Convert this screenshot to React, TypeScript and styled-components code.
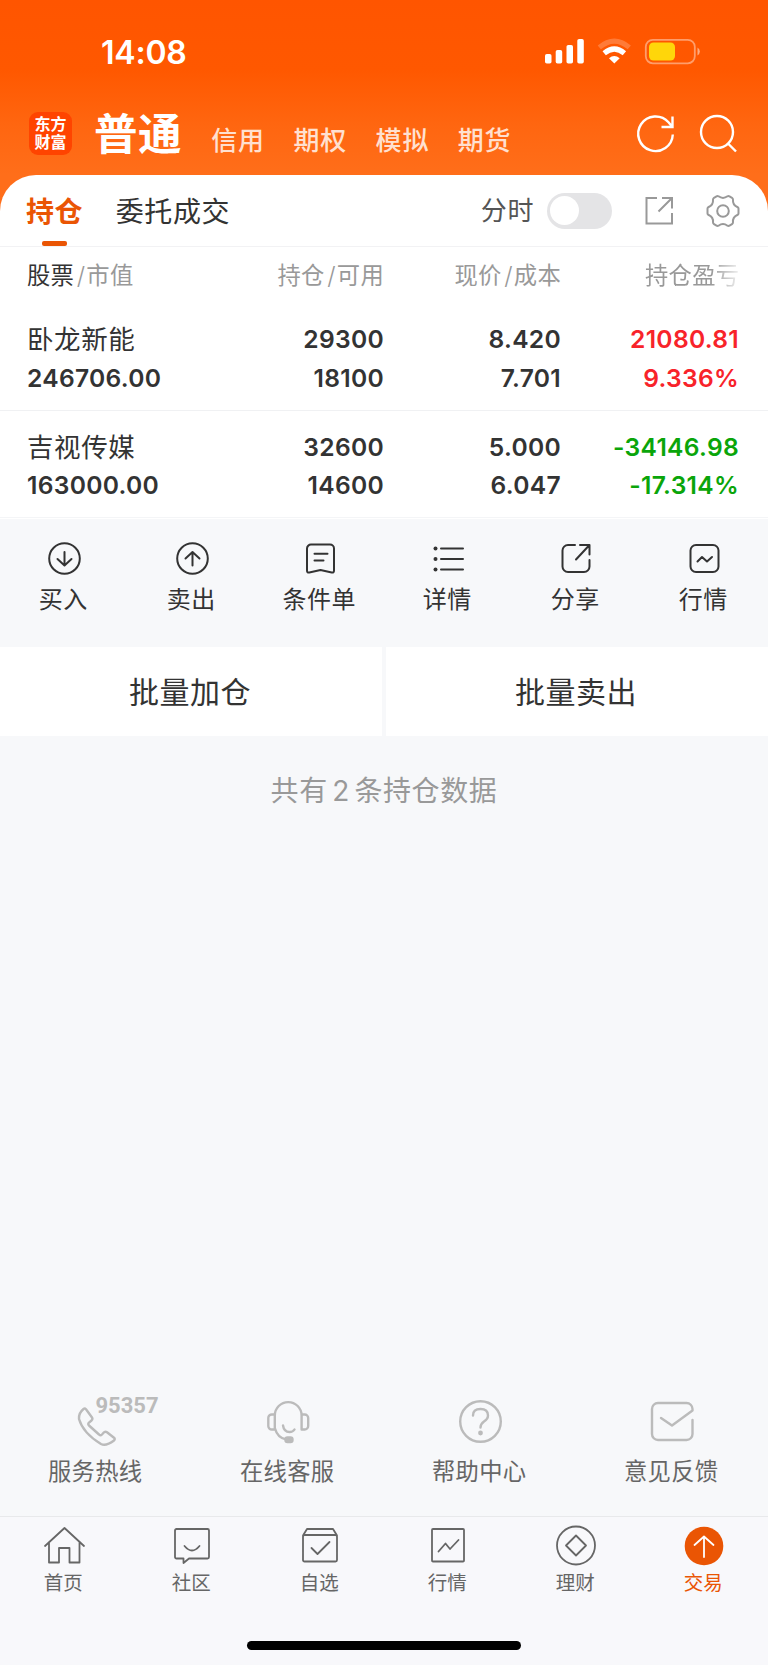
import React from "react";
import styled, { createGlobalStyle } from "styled-components";

const sans = `Inter, "Noto Sans CJK SC", sans-serif`;

const GlobalStyle = createGlobalStyle`
  *, *::before, *::after { box-sizing: border-box; }
  body { margin: 0; background: #f7f8fa; font-family: ${sans}; }
  svg { display: block; flex: none; overflow: visible; }
`;

const Screen = styled.div`
  width: 768px;
  height: 1665px;
  display: flex;
  flex-direction: column;
  background: #f7f8fa;
  color: #333;
  overflow: hidden;
  white-space: nowrap;
`;

const Top = styled.header`
  height: 215px;
  flex: none;
  background: linear-gradient(#ff5500 0, #ff5800 70px, #ff6610 125px, #ff6e1a 175px, #ff6e1a 100%);
`;

const StatusBar = styled.div`
  height: 104px;
  padding: 0 68px 0 101px;
  display: flex;
  align-items: center;
  justify-content: space-between;
  color: #fff;
`;

const Clock = styled.span`
  padding-top: 2px;
  font-size: 32px;
  font-weight: 600;
  line-height: 40px;
  letter-spacing: -0.2px;
`;

const StatusIcons = styled.div`
  display: flex;
  align-items: center;
`;

const AccountBar = styled.div`
  height: 71px;
  padding: 0 31px 0 29px;
  display: flex;
  align-items: center;
`;

const Logo = styled.div`
  width: 43px;
  height: 43px;
  margin: -12px 22px 0 0;
  padding: 4px 0 0 5.5px;
  border-radius: 9px;
  background: #ff4400;
  color: #fff;
  font-size: 16px;
  font-weight: 700;
  line-height: 17.6px;
`;

const CurrentAccount = styled.h1`
  margin: -12px 29.2px 0 0;
  font-size: 43.5px;
  font-weight: 700;
  line-height: 50px;
  letter-spacing: 0.5px;
  color: #fff;
`;

const Accounts = styled.nav`
  display: flex;
  gap: 28.6px;
  margin-top: 3px;
`;

const Account = styled.a`
  font-size: 26px;
  font-weight: 500;
  line-height: 32px;
  letter-spacing: 0.8px;
  color: #ffe0d0;
`;

const HeaderTools = styled.div`
  display: flex;
  gap: 24px;
  margin: -12px 0 0 auto;
`;

const Card = styled.main`
  flex: none;
  height: 343.5px;
  margin-top: -40px;
  background: #fff;
  border-radius: 36px 36px 0 0;
`;

const TabBar = styled.div`
  height: 72px;
  padding: 0 28px 0 26px;
  display: flex;
  align-items: center;
  border-bottom: 1px solid #f2f2f4;
`;

const Tab = styled.div<{ $active?: boolean }>`
  height: 71px;
  margin-right: 32.5px;
  display: flex;
  flex-direction: column;
  align-items: center;
  font-size: 28px;
  font-weight: ${(p) => (p.$active ? 700 : 400)};
  line-height: 74px;
  letter-spacing: 0.6px;
  color: ${(p) => (p.$active ? "#ea5504" : "#333")};

  &::after {
    content: "";
    width: 25px;
    height: 5px;
    margin-top: -8px;
    border-radius: 2px;
    flex: none;
    background: ${(p) => (p.$active ? "#ea5504" : "transparent")};
  }
`;

const TabTools = styled.div`
  margin-left: auto;
  display: flex;
  align-items: center;
  font-size: 26px;
  line-height: 38px;
  letter-spacing: 0.6px;
  color: #555;
`;

const Switch = styled.div`
  width: 65px;
  height: 36px;
  margin: 0 33.5px 0 12.5px;
  padding: 3.5px;
  border-radius: 18px;
  background: #e4e4e6;

  &::after {
    content: "";
    display: block;
    width: 29px;
    height: 29px;
    border-radius: 50%;
    background: #fff;
  }
`;

const Columns = styled.div`
  display: grid;
  grid-template-columns: 180px 177px 177px 178px;
  padding: 0 29px 0 27px;
`;

const HeadRow = styled(Columns)`
  height: 56px;
  font-size: 23.3px;
  font-weight: 400;
  line-height: 58px;
  letter-spacing: 0.3px;
  color: #999;

  b { font-weight: 400; color: #333; }
  i { font-style: normal; font-size: 24px; font-weight: 300; padding: 0 1px 0 2.5px; }
`;

const HeadCell = styled.div<{ $fade?: boolean }>`
  text-align: ${(p) => (p.$fade ? "left" : "right")};
  ${(p) =>
    p.$fade &&
    `padding-left: 84px;
     overflow: hidden;
     mask-image: linear-gradient(to right, #000 150px, transparent 183px);`}
  &:first-child { text-align: left; }
`;

const HoldingRow = styled(Columns)`
  height: 107.5px;
  padding-top: 17px;
  align-content: start;
  border-bottom: 1px solid #f0f1f3;

  &:last-child { border-bottom-color: #f4f5f7; }
`;

const Holding = styled.div<{ $tone?: string }>`
  display: flex;
  flex-direction: column;
  text-align: right;
  font-size: 24.6px;
  font-weight: 600;
  line-height: 38.5px;
  letter-spacing: 0.3px;
  color: ${(p) => p.$tone ?? "#333"};
  &:first-child { text-align: left; }
`;

const StockName = styled.span`
  font-size: 26.5px;
  font-weight: 400;
  letter-spacing: 0.6px;
`;

const Actions = styled.div`
  height: 128.5px;
  flex: none;
  display: grid;
  grid-template-columns: repeat(6, 1fr);
  padding-top: 22.5px;
`;

const Action = styled.div`
  display: flex;
  flex-direction: column;
  align-items: center;
  font-size: 24px;
  line-height: 36px;
  letter-spacing: 0.5px;
  color: #333;
  svg { margin-bottom: 5.5px; }
`;

const Label = styled.span`
  padding-right: 1.6px;
`;

const BatchBar = styled.div`
  height: 89px;
  flex: none;
  display: grid;
  grid-template-columns: 382px 1fr;
  gap: 4px;
`;

const BatchButton = styled.button`
  border: 0;
  padding: 2px 2px 0 0;
  background: #fff;
  font: 400 30px/87px ${sans};
  letter-spacing: 0.5px;
  color: #333;
`;

const Summary = styled.p`
  margin: 37px 0 0;
  font-size: 28px;
  font-weight: 400;
  line-height: 36px;
  letter-spacing: 0.6px;
  word-spacing: -4px;
  text-align: center;
  color: #999;
`;

const HelpBar = styled.div`
  margin-top: auto;
  height: 121px;
  padding-top: 1px;
  flex: none;
  display: grid;
  grid-template-columns: repeat(4, 1fr);
`;

const HelpItem = styled.div`
  display: flex;
  flex-direction: column;
  align-items: center;
  font-size: 23.3px;
  line-height: 34px;
  letter-spacing: 0.3px;
  color: #666;
  svg { margin-bottom: 9px; }
`;

const Phone = styled.div`
  position: relative;
`;

const PhoneNumber = styled.span`
  position: absolute;
  left: 21.5px;
  top: -2.5px;
  font: 700 22px/24px Roboto, sans-serif;
  letter-spacing: 0;
  color: #bbb;
`;

const NavBar = styled.nav`
  height: 125px;
  flex: none;
  display: grid;
  grid-template-columns: repeat(6, 1fr);
  padding-top: 8.5px;
  border-top: 1px solid #e8e9eb;
`;

const NavItem = styled.a<{ $active?: boolean }>`
  display: flex;
  flex-direction: column;
  align-items: center;
  font-size: 19.5px;
  line-height: 31px;
  color: ${(p) => (p.$active ? "#ea5504" : "#666")};
  svg { margin-bottom: 2px; }
`;

const HomeIndicator = styled.div`
  width: 274px;
  height: 9px;
  margin: 0 auto 15px;
  flex: none;
  border-radius: 5px;
  background: #000;
`;

const Footer = styled.footer`
  height: 149px;
  flex: none;
  display: flex;
  flex-direction: column;
  background: #f8f8fb;
`;

const SettingsIcon = styled.svg`
  margin-left: 32px;
`;

type IconProps = { w: number; h: number; stroke?: string; sw?: number; children: React.ReactNode };
const Icon = ({ w, h, stroke = "#333", sw = 2, children }: IconProps) => (
  <svg width={w} height={h} viewBox={`0 0 ${w} ${h}`} fill="none" stroke={stroke} strokeWidth={sw} strokeLinecap="round" strokeLinejoin="round">
    {children}
  </svg>
);

const actions = [
  { label: "买入", icon: <><circle cx="17.5" cy="17.5" r="15.3" /><path d="M17.5 11v13M10.5 18l7 6.5 7-6.5" /></> },
  { label: "卖出", icon: <><circle cx="17.5" cy="17.5" r="15.3" /><path d="M17.5 24.5V11.5M10.5 17.5l7-6.5 7 6.5" /></> },
  { label: "条件单", icon: <><path d="M8 3.500h19a4 4 0 0 1 4 4V29.500q0 2.500-2.300 2L17.500 29 6.300 31.500Q4 32 4 29.500V7.500a4 4 0 0 1 4-4Z" /><path d="M11.500 12.700h13M11.500 19.500h9" /></> },
  { label: "详情", icon: <><path d="M10 7.500h22M10 18h22M10 28.500h22" /><g fill="#333" stroke="none"><circle cx="4.500" cy="7.500" r="2" /><circle cx="4.500" cy="18" r="2" /><circle cx="4.500" cy="28.500" r="2" /></g></> },
  { label: "分享", icon: <><path d="M16 4H9a5.500 5.500 0 0 0-5.500 5.500v16A5.500 5.500 0 0 0 9 31h16a5.500 5.500 0 0 0 5.500-5.500V19M21 4h9.500v9.500M30 4.500 17 18.500" /></> },
  { label: "行情", icon: <><rect x="3.500" y="4" width="28" height="27" rx="5.500" /><path d="M10.500 20.500 15 16l5 4.500 5-4.500" /></> },
];

const holdings = [
  { name: "卧龙新能", value: "246706.00", held: "29300", usable: "18100", price: "8.420", cost: "7.701", profit: "21080.81", rate: "9.336%", tone: "#f8232a" },
  { name: "吉视传媒", value: "163000.00", held: "32600", usable: "14600", price: "5.000", cost: "6.047", profit: "-34146.98", rate: "-17.314%", tone: "#0aa50a" },
];

const navItems = [
  { label: "首页", icon: <path d="M1 20 20.500 2 40 20M5 17v19.500h10V22h10.500v14.500h10V17" /> },
  { label: "社区", icon: <path d="M4.500 3h31a1.500 1.500 0 0 1 1.500 1.500V31a1.500 1.500 0 0 1-1.500 1.500H17L11.500 37v-4.500h-7A1.500 1.500 0 0 1 3 31V4.500A1.500 1.500 0 0 1 4.500 3ZM12.500 20q7.500 9 15 0" /> },
  { label: "自选", icon: <path d="M3 9.500 7 3h26l4 6.500M4.500 9h31A1.500 1.500 0 0 1 37 10.500V34a1.500 1.500 0 0 1-1.500 1.500h-31A1.500 1.500 0 0 1 3 34V10.500A1.500 1.500 0 0 1 4.500 9ZM11.500 22l6 6L29.500 16" /> },
  { label: "行情", icon: <><rect x="4" y="3" width="32" height="32.500" rx="1" /><path d="m10.500 25.500 7-8 4.500 5.500 8.500-9" /></> },
  { label: "理财", icon: <><circle cx="20" cy="19.500" r="19" /><path d="m20 9.500 10 10-10 10-10-10Z" /></> },
  { label: "交易", icon: <><circle cx="20" cy="20" r="19.300" fill="#ea5504" stroke="none" /><path d="M20 31V10.500M10.500 19l9.500-8.500 9.500 8.500" stroke="#fff" /></> },
];

export default function App() {
  return (
    <Screen>
      <GlobalStyle />
      <Top>
        <StatusBar>
          <Clock>14:08</Clock>
          <StatusIcons>
            <svg width="156" height="28" viewBox="0 0 156 28">
              <g fill="#fff">
                <rect x="1" y="16" width="6.500" height="9.500" rx="1.800" />
                <rect x="11.700" y="12" width="6.500" height="13.500" rx="1.800" />
                <rect x="22.500" y="7" width="6.500" height="18.500" rx="1.800" />
                <rect x="33.300" y="1" width="6.500" height="24.500" rx="1.800" />
              </g>
              <path d="M55.300 9.300q15-12.500 30 0" fill="none" stroke="#fff" strokeOpacity=".22" strokeWidth="5" />
              <path d="M60.200 15.200q10.100-8.400 20.200 0" fill="none" stroke="#fff" strokeWidth="5.200" />
              <path d="M65 20.300q5.300-4.600 10.700 0L70.300 25.600Z" fill="#fff" />
              <rect x="101.800" y="1.800" width="49" height="23.500" rx="7" fill="none" stroke="#fff" strokeOpacity=".42" strokeWidth="1.800" />
              <rect x="105" y="4.500" width="26" height="18" rx="4.500" fill="#ffd60a" />
              <path d="M153.500 9.500q2.300 1.500 2.300 4t-2.300 4Z" fill="#fff" fillOpacity=".5" />
            </svg>
          </StatusIcons>
        </StatusBar>
        <AccountBar>
          <Logo>东方<br />财富</Logo>
          <CurrentAccount>普通</CurrentAccount>
          <Accounts>
            {["信用", "期权", "模拟", "期货"].map((a) => <Account key={a}>{a}</Account>)}
          </Accounts>
          <HeaderTools>
            <svg width="38" height="38" viewBox="0 0 38 38" fill="none" stroke="#fff" strokeWidth="2.400">
              <path d="M35.800 19.500A17.300 17.300 0 1 1 31.500 7.300L35 11.500M35.500 1.500V12H24.500" />
            </svg>
            <svg width="38" height="38" viewBox="0 0 38 38" fill="none" stroke="#fff" strokeWidth="2.400">
              <circle cx="18" cy="17" r="16" /><path d="m28.500 28 8.500 8.500" />
            </svg>
          </HeaderTools>
        </AccountBar>
      </Top>

      <Card>
        <TabBar>
          <Tab $active>持仓</Tab>
          <Tab>委托成交</Tab>
          <TabTools>
            分时
            <Switch />
            <svg width="29" height="29" viewBox="0 0 29 29" fill="none" stroke="#999" strokeWidth="2">
              <path d="M12 2H1.500v25.500h25.500V17M17 2h10v10.500M27 2 13.500 15.500" />
            </svg>
            <SettingsIcon width="34" height="34" viewBox="0 0 34 34" fill="none" stroke="#999" strokeWidth="2" strokeLinejoin="round">
              <circle cx="17" cy="17" r="5.800" />
              <path transform="translate(-.5)" d="M13 2.300Q17.500 5.500 22 2.300Q23 1.700 24 2.300L26.500 3.800Q27.500 4.500 27.500 5.700Q27 11 31.800 13Q33 13.500 33 14.500V19.500Q33 20.500 31.800 21Q27 23 27.500 28.300Q27.500 29.500 26.500 30.200L24 31.700Q23 32.300 22 31.700Q17.500 28.500 13 31.700Q12 32.300 11 31.700L8.500 30.200Q7.500 29.500 7.500 28.300Q8 23 3.200 21Q2 20.500 2 19.500V14.500Q2 13.500 3.200 13Q8 11 7.500 5.700Q7.500 4.500 8.500 3.800L11 2.300Q12 1.700 13 2.300Z" />
            </SettingsIcon>
          </TabTools>
        </TabBar>
        <HeadRow>
          <HeadCell><b>股票</b><i>/</i>市值</HeadCell>
          <HeadCell>持仓<i>/</i>可用</HeadCell>
          <HeadCell>现价<i>/</i>成本</HeadCell>
          <HeadCell $fade>持仓盈亏</HeadCell>
        </HeadRow>
        {holdings.map((h) => (
          <HoldingRow key={h.name}>
            <Holding><StockName>{h.name}</StockName><span>{h.value}</span></Holding>
            <Holding><span>{h.held}</span><span>{h.usable}</span></Holding>
            <Holding><span>{h.price}</span><span>{h.cost}</span></Holding>
            <Holding $tone={h.tone}><span>{h.profit}</span><span>{h.rate}</span></Holding>
          </HoldingRow>
        ))}
      </Card>

      <Actions>
        {actions.map((a) => (
          <Action key={a.label}><Icon w={35} h={35}>{a.icon}</Icon><Label>{a.label}</Label></Action>
        ))}
      </Actions>
      <BatchBar>
        <BatchButton>批量加仓</BatchButton>
        <BatchButton>批量卖出</BatchButton>
      </BatchBar>
      <Summary>共有 2 条持仓数据</Summary>

      <HelpBar>
        <HelpItem>
          <Phone>
            <Icon w={44} h={50} stroke="#bbb" sw={2.4}>
              <path d="M9.500 13Q4.500 17 5 23Q9 37 27 48Q32 50.500 40 44.500Q41.500 43 40 41.700L33 36.200Q31 35 29.500 36.800L28 38.500Q26.500 40 25 38.500L15 29.500Q13.500 28 15 26.700L17.500 24.500Q19 23 18 21.500L12 13.300Q10.800 12 9.500 13Z" />
            </Icon>
            <PhoneNumber>95357</PhoneNumber>
          </Phone>
          <Label>服务热线</Label>
        </HelpItem>
        <HelpItem>
          <Icon w={44} h={50} stroke="#bbb" sw={2.4}>
            <path d="M8.800 32V19.500a13.300 13.300 0 0 1 26.800 0v12M8.800 18.500H6A3.500 3.500 0 0 0 2.300 22v8A3.500 3.500 0 0 0 6 33.500h2.800M35.600 18.500h3A3.500 3.500 0 0 1 42.200 22v8a3.500 3.500 0 0 1-3.600 3.500h-3V18.500M8.800 32q2.700 10 11.500 11.500M17 29.500q1 6.500 6.500 6.500 3.500 0 5-2.500" />
            <rect x="19.500" y="41.500" width="7" height="4.500" rx="2" fill="#bbb" />
          </Icon>
          <Label>在线客服</Label>
        </HelpItem>
        <HelpItem>
          <Icon w={44} h={50} stroke="#bbb" sw={2.4}>
            <circle cx="22.500" cy="25.500" r="20.300" />
            <path d="M15 19.500q0-6.500 7.500-6.500t7.500 6.500q0 3.500-4 6-3.500 2.500-3.500 6" />
            <circle cx="22.500" cy="37" r="1.200" fill="#bbb" />
          </Icon>
          <Label>帮助中心</Label>
        </HelpItem>
        <HelpItem>
          <Icon w={44} h={50} stroke="#bbb" sw={2.4}>
            <path d="M42.500 24v14a6 6 0 0 1-6 6H8a6 6 0 0 1-6-6V13a6 6 0 0 1 6-6h28.500a6 6 0 0 1 6 6v1.500L22 29.500 11 22" />
          </Icon>
          <Label>意见反馈</Label>
        </HelpItem>
      </HelpBar>
      <Footer>
        <NavBar>
          {navItems.map((n, i) => (
            <NavItem key={n.label} $active={i === 5}>
              <Icon w={40} h={40} stroke="#666" sw={1.8}>{n.icon}</Icon>
              <Label>{n.label}</Label>
            </NavItem>
          ))}
        </NavBar>
        <HomeIndicator />
      </Footer>
    </Screen>
  );
}
